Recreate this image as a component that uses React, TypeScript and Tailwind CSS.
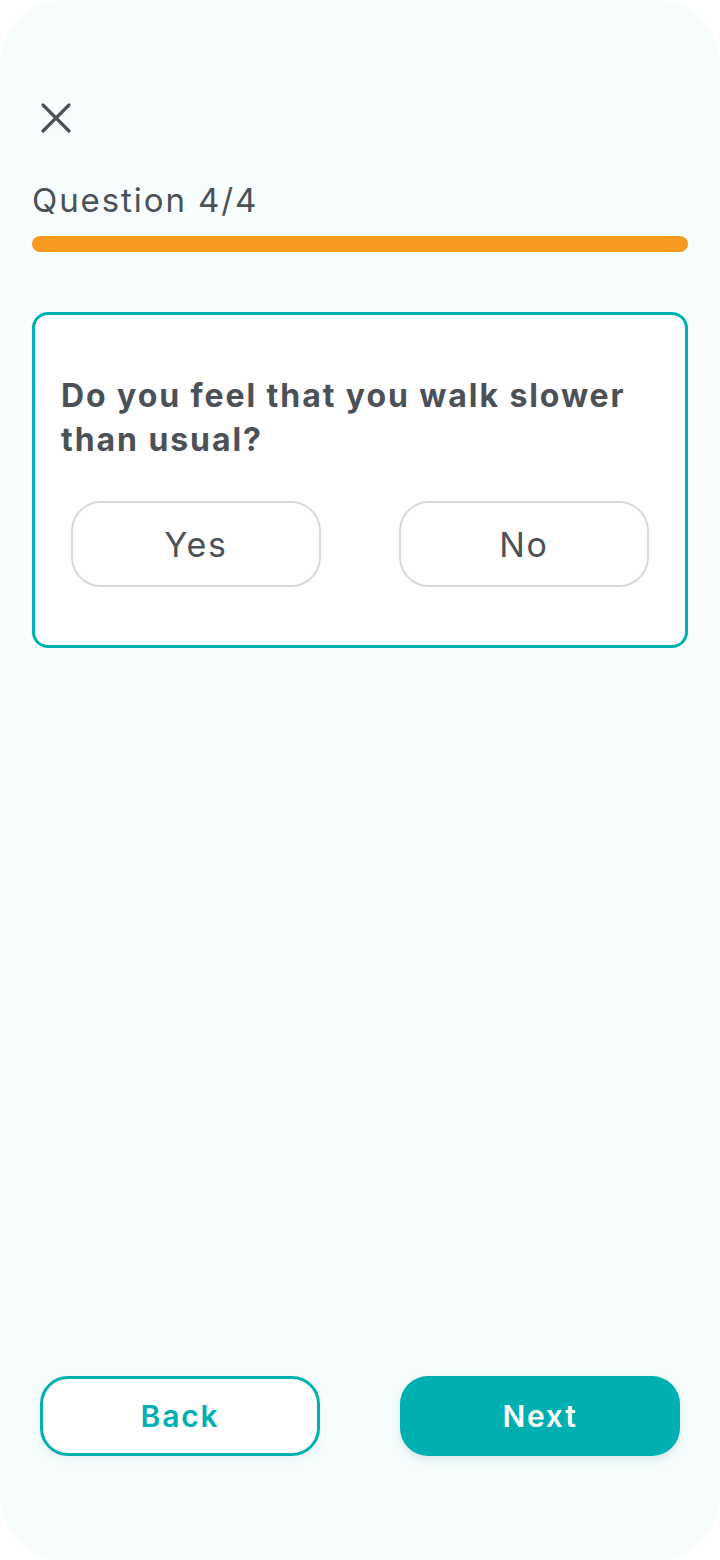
import { useState } from 'react';

type Answer = 'yes' | 'no' | null;

function CloseIcon() {
  return (
    <svg width="30" height="30" viewBox="0 0 30 30" fill="none">
      <path
        d="M2 2L28 28M28 2L2 28"
        stroke="#4b5156"
        strokeWidth="3.2"
        strokeLinecap="round"
      />
    </svg>
  );
}

export default function App() {
  const [answer, setAnswer] = useState<Answer>(null);

  return (
    <div className="h-[1560px] w-full bg-white font-['Inter',sans-serif] text-[#4b5156]">
      <div className="flex h-full flex-col rounded-[64px] bg-[#f7fdfd] px-8">
        <button className="ml-[9px] mt-[103px] h-[30px] w-[30px]" aria-label="Close">
          <CloseIcon />
        </button>

        <div className="mt-[47px] text-[33px] leading-[40px] tracking-[0.058em]">
          Question 4/4
        </div>

        <div className="mt-4 h-4 w-full rounded-full bg-[#f7991f]" />

        <div className="mt-[60px] rounded-[16px] border-[3px] border-[#00afaf] bg-white pt-[59px] pb-[58px]">
          <h2 className="pl-[26px] pr-6 text-[32px] font-bold leading-[44px] tracking-[0.06em]">
            Do you feel that you walk slower than usual?
          </h2>
          <div className="mt-[39px] flex justify-between px-[36px]">
            <button
              onClick={() => setAnswer('yes')}
              className={`h-[86px] w-[250px] rounded-[30px] border-2 text-[34px] tracking-[0.05em] ${
                answer === 'yes' ? 'border-[#00afaf]' : 'border-[#d9d9d9]'
              }`}
            >
              Yes
            </button>
            <button
              onClick={() => setAnswer('no')}
              className={`h-[86px] w-[250px] rounded-[30px] border-2 text-[34px] tracking-[0.05em] ${
                answer === 'no' ? 'border-[#00afaf]' : 'border-[#d9d9d9]'
              }`}
            >
              No
            </button>
          </div>
        </div>

        <div className="flex-1" />

        <div className="mb-[104px] flex justify-between px-2">
          <button className="h-20 w-[280px] rounded-[28px] border-[3px] border-[#00afaf] bg-white text-[30px] font-semibold tracking-[0.06em] text-[#00afaf] shadow-[0_4px_10px_rgba(0,80,80,0.06)]">
            Back
          </button>
          <button className="h-20 w-[280px] rounded-[28px] bg-[#00afaf] text-[30px] font-semibold tracking-[0.06em] text-white shadow-[0_4px_10px_rgba(0,80,80,0.12)]">
            Next
          </button>
        </div>
      </div>
    </div>
  );
}
